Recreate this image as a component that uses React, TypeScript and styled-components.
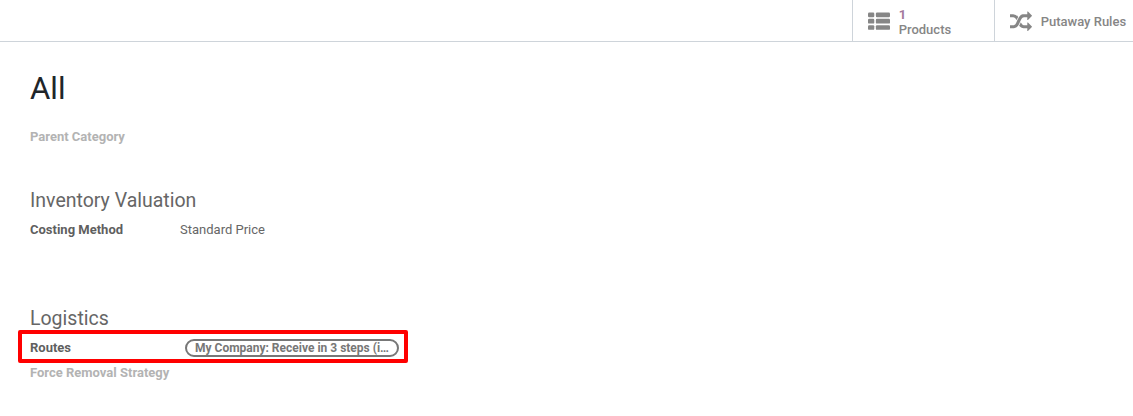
import React from "react";
import styled, { createGlobalStyle } from "styled-components";

const GlobalStyle = createGlobalStyle`
  * { box-sizing: border-box; }
  body { margin: 0; background: #fff; font-family: Roboto, "Noto Sans", sans-serif; font-size: 13px; line-height: 1.5; color: #666; }
`;
const Sheet = styled.main`height: 416px; overflow: hidden; background: #fff;`;
const ButtonBox = styled.div`display: flex; justify-content: flex-end; height: 42px; border-bottom: 1px solid #ced4da;`;
const StatButton = styled.button<{ $width: number }>`
  width: ${(p) => p.$width}px; padding: 2px 0 0 14.7px; display: flex; align-items: center; gap: 9px;
  border: 0; border-left: 1px solid #ced4da; background: #fff; font: 500 13px/15px Roboto, sans-serif; color: #868686; text-align: left; white-space: nowrap;
`;
const StatIcon = styled.svg`width: 22px; height: 22px; fill: #868686; flex: none;`;
const StatValue = styled.span`display: block; font-weight: 700; color: #a3789c;`;
const Content = styled.div`padding: 24px 30px;`;
const Title = styled.h1`margin: 0; font-size: 31.2px; font-weight: 400; line-height: 46px; color: #212529;`;
const Label = styled.span<{ $muted?: boolean }>`width: 150px; font-weight: 700; color: ${(p) => (p.$muted ? "#b3b3b3" : "#5f5f5f")};`;
const Row = styled.div<{ $top?: number }>`display: flex; align-items: center; height: 25px; margin-top: ${(p) => p.$top ?? 0}px;`;
const Section = styled.h2<{ $top: number }>`margin: ${(p) => p.$top}px 0 0; font-size: 19.5px; font-weight: 400; line-height: 32px; color: #666;`;
const Highlight = styled.div`display: flex; align-items: center; width: 390px; height: 33px; margin: -5px 0 -3px -12px; padding: 2px 0 0 8px; border: 4px solid #f00; border-radius: 2px;`;
const Tag = styled.span`margin: 1px 0 0 5px; height: 18px; width: 214px; padding: 0 8px; border: 2px solid #777; border-radius: 9px; font-size: 12px; line-height: 14px; font-weight: 700; color: #777; white-space: nowrap;`;

function ListIcon() {
  return (
    <StatIcon viewBox="0 0 1792 1792" aria-hidden="true">
      {[128, 640, 1152].map((y) => (
        <React.Fragment key={y}>
          <rect x="0" y={y} width="512" height="384" rx="96" />
          <rect x="640" y={y} width="1152" height="384" rx="96" />
        </React.Fragment>
      ))}
    </StatIcon>
  );
}

function ShuffleIcon() {
  return (
    <StatIcon viewBox="0 0 1792 1792" aria-hidden="true">
      <path d="M666 481q-60 92-137 273-22-45-37-72.5t-40.5-63.5-51-56.5-63-35-81.5-14.5h-224q-14 0-23-9t-9-23v-192q0-14 9-23t23-9h224q250 0 410 225zm1126 799q0 14-9 23l-320 320q-9 9-23 9-13 0-22.5-9.5t-9.5-22.5v-192q-32 0-85 .5t-81 1-73-1-71-5-64-10.5-63-18.5-58-28.5-59-40-55-53.5-56-69.5q59-93 136-273 22 45 37 72.5t40.5 63.5 51 56.5 63 35 81.5 14.5h256v-192q0-14 9-23t23-9q12 0 24 10l319 319q9 9 9 23zm0-896q0 14-9 23l-320 320q-9 9-23 9-13 0-22.5-9.5t-9.5-22.5v-192h-256q-48 0-87 15t-69 45-51 61.5-45 77.5q-32 62-78 171-29 66-49.5 111t-54 105-64 100-74 83-90 68.5-106.5 42-128 16.5h-224q-14 0-23-9t-9-23v-192q0-14 9-23t23-9h224q48 0 87-15t69-45 51-61.5 45-77.5q32-62 78-171 29-66 49.5-111t54-105 64-100 74-83 90-68.5 106.5-42 128-16.5h256v-192q0-14 9-23t23-9q12 0 24 10l319 319q9 9 9 23z" />
    </StatIcon>
  );
}

export default function App() {
  return (
    <Sheet>
      <GlobalStyle />
      <ButtonBox>
        <StatButton $width={142}>
          <ListIcon />
          <span><StatValue>1</StatValue>Products</span>
        </StatButton>
        <StatButton $width={139}>
          <ShuffleIcon />
          <span>Putaway Rules</span>
        </StatButton>
      </ButtonBox>
      <Content>
        <Title>All</Title>
        <Row $top={12}><Label $muted>Parent Category</Label></Row>
        <Section $top={36}>Inventory Valuation</Section>
        <Row><Label>Costing Method</Label><span>Standard Price</span></Row>
        <Section $top={61}>Logistics</Section>
        <Highlight><Label>Routes</Label><Tag>My Company: Receive in 3 steps (i…</Tag></Highlight>
        <Row><Label $muted>Force Removal Strategy</Label></Row>
      </Content>
    </Sheet>
  );
}
